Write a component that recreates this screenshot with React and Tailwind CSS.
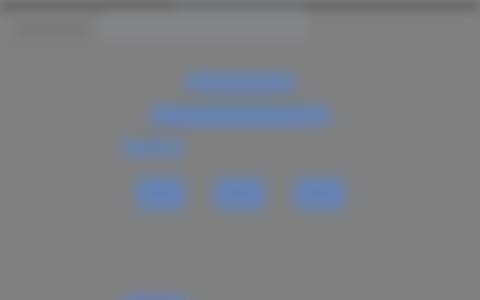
import React from 'react';

const Blob = ({ className }) => (
  <div className={`shrink-0 rounded-lg bg-[#6483b5] blur-[7px] ${className}`} />
);

const App = () => {
  return (
    <div
      className="w-[480px] h-[300px] overflow-hidden bg-[#808080] flex flex-col"
      style={{ fontFamily: '"Liberation Sans", Arial, sans-serif' }}
    >
      {/* Top bar */}
      <div className="shrink-0 h-[12px] flex bg-[#6b6b6b] blur-[4px]">
        <div className="ml-[175px] w-[130px] bg-[#717274]" />
      </div>

      {/* Sub header */}
      <div className="shrink-0 h-[30px] flex items-center blur-[5px]">
        <div className="ml-[14px] w-[76px] h-[22px] bg-[#7b7b7b]" />
        <div className="ml-[12px] w-[205px] h-[26px] bg-[#838486]" />
      </div>

      {/* Content */}
      <div className="shrink-0 w-[240px] mx-auto flex flex-col mt-[31px]">
        <div className="flex justify-center">
          <Blob className="w-[110px] h-[18px]" />
        </div>
        <div className="flex justify-center mt-[14px]">
          <Blob className="w-[180px] h-[20px]" />
        </div>
        <Blob className="w-[64px] h-[14px] mt-[16px]" />
        <div className="flex justify-center gap-[28px] mt-[22px]">
          <Blob className="w-[50px] h-[32px]" />
          <Blob className="w-[52px] h-[32px]" />
          <Blob className="w-[52px] h-[32px]" />
        </div>
        <Blob className="w-[70px] h-[20px] mt-[86px]" />
      </div>
    </div>
  );
};

export default App;
